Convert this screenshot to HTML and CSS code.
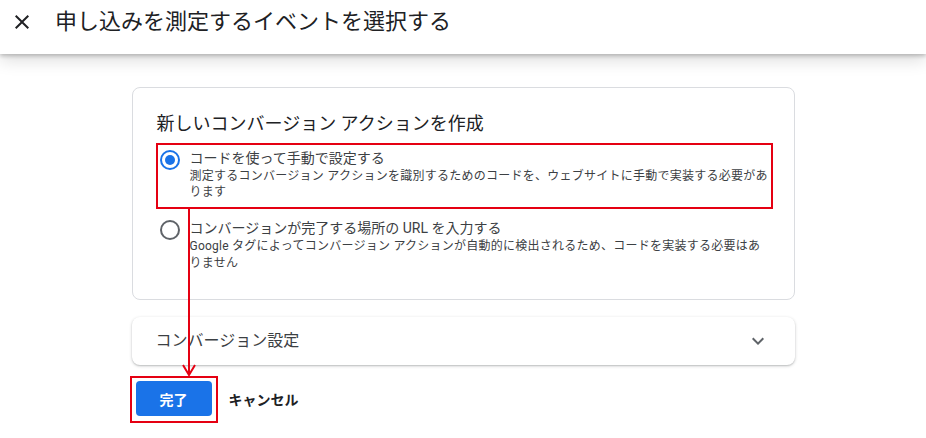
FILE: index.html
```html
<!DOCTYPE html>
<html lang="ja">
<head>
<meta charset="utf-8">
<link rel="stylesheet" href="styles.css">
</head>
<body>
<header class="topbar">
  <svg class="close" viewBox="0 0 24 24" width="24" height="24"><path d="M19 6.41L17.59 5 12 10.59 6.41 5 5 6.41 10.59 12 5 17.59 6.41 19 12 13.41 17.59 19 19 17.59 13.41 12z" fill="#202124"/></svg>
  <h1 class="title">申し込みを測定するイベントを選択する</h1>
</header>
<main class="content">
  <section class="card">
    <h2 class="card-title">新しいコンバージョン アクションを作成</h2>
    <div class="option">
      <span class="radio checked"><span class="dot"></span></span>
      <div class="opt-text">
        <div class="opt-title">コードを使って手動で設定する</div>
        <div class="opt-desc">測定するコンバージョン アクションを識別するためのコードを、ウェブサイトに手動で実装する必要があります</div>
      </div>
    </div>
    <div class="option second">
      <span class="radio"></span>
      <div class="opt-text">
        <div class="opt-title">コンバージョンが完了する場所の URL を入力する</div>
        <div class="opt-desc">Google タグによってコンバージョン アクションが自動的に検出されるため、コードを実装する必要はありません</div>
      </div>
    </div>
  </section>
  <section class="card collapsed">
    <span class="collapsed-title">コンバージョン設定</span>
    <svg class="chevron" viewBox="0 0 24 24" width="24" height="24"><path d="M7.41 8.59L12 13.17l4.59-4.58L18 10l-6 6-6-6 1.41-1.41z" fill="#5f6368"/></svg>
  </section>
  <div class="actions">
    <button class="btn-primary">完了</button>
    <button class="btn-text">キャンセル</button>
  </div>
</main>
<div class="anno box-option"></div>
<div class="anno box-button"></div>
<div class="anno arrow-line"></div>
<svg class="anno arrow-head" viewBox="0 0 14 12" width="14" height="12"><path d="M1 1 L7 11 L13 1" fill="none" stroke="#e50012" stroke-width="2"/></svg>
</body>
</html>
```
FILE: styles.css
```css
* { box-sizing: border-box; }
html, body { margin: 0; padding: 0; background: #fff; }
body {
  width: 926px;
  height: 438px;
  overflow: hidden;
  position: relative;
  font-family: Roboto, "Noto Sans CJK JP", sans-serif;
  color: #202124;
}
.topbar {
  height: 54px;
  display: flex;
  align-items: flex-start;
  padding: 10px 0 0 10px;
  background: #fff;
  box-shadow: 0 2px 4px rgba(0,0,0,0.22), 0 6px 16px rgba(0,0,0,0.14);
  position: relative;
  z-index: 1;
}
.close { flex: none; }
.title {
  margin: 0 0 0 21px;
  font-size: 22px;
  line-height: 24px;
  font-weight: 400;
  color: #202124;
}
.content {
  width: 663px;
  margin: 33px auto 0;
  display: flex;
  flex-direction: column;
}
.card {
  border: 1px solid #dadce0;
  border-radius: 8px;
  padding: 24px 23px 28px 24px;
  background: #fff;
}
.card-title {
  margin: 0 0 12px;
  font-size: 18px;
  line-height: 24px;
  font-weight: 400;
  color: #202124;
}
.option {
  display: flex;
  align-items: flex-start;
  padding-left: 3px;
}
.option.second { margin-top: 18px; }
.radio {
  flex: none;
  width: 20px;
  height: 20px;
  margin-top: 2px;
  border: 2px solid #5f6368;
  border-radius: 50%;
  display: flex;
  align-items: center;
  justify-content: center;
}
.radio.checked { border-color: #1a73e8; }
.dot {
  width: 10px;
  height: 10px;
  border-radius: 50%;
  background: #1a73e8;
}
.opt-text { margin-left: 10px; flex: 1; }
.opt-title {
  font-size: 14px;
  line-height: 20px;
  color: #3c4043;
}
.opt-desc {
  font-size: 12px;
  line-height: 16px;
  letter-spacing: 0.25px;
  color: #3c4043;
}
.second .opt-desc { line-height: 16.5px; }
.collapsed {
  margin-top: 17px;
  height: 48px;
  padding: 0 25px 0 24px;
  border: none;
  box-shadow: 0 1px 3px rgba(60,64,67,0.3), 0 1px 1px rgba(60,64,67,0.1);
  display: flex;
  align-items: center;
  justify-content: space-between;
}
.collapsed-title {
  font-size: 16px;
  line-height: 24px;
  color: #3c4043;
}
.actions {
  margin-top: 16px;
  margin-left: 4px;
  display: flex;
  align-items: center;
  gap: 9px;
}
.btn-primary {
  width: 76px;
  height: 35px;
  border: none;
  border-radius: 4px;
  background: #1a73e8;
  color: #fff;
  font-family: inherit;
  font-size: 14px;
  font-weight: 700;
}
.btn-text {
  border: none;
  background: none;
  padding: 0 8px;
  height: 35px;
  font-family: inherit;
  font-size: 14px;
  font-weight: 700;
  color: #202124;
}
.anno { position: absolute; z-index: 2; }
.box-option {
  left: 156px; top: 143px; width: 617px; height: 66px;
  border: 2px solid #e50012;
}
.box-button {
  left: 130px; top: 376px; width: 88px; height: 47px;
  border: 2px solid #e50012;
}
.arrow-line {
  left: 188px; top: 208px; width: 2px; height: 166px;
  background: #e50012;
}
.arrow-head { left: 182px; top: 364px; }
```
